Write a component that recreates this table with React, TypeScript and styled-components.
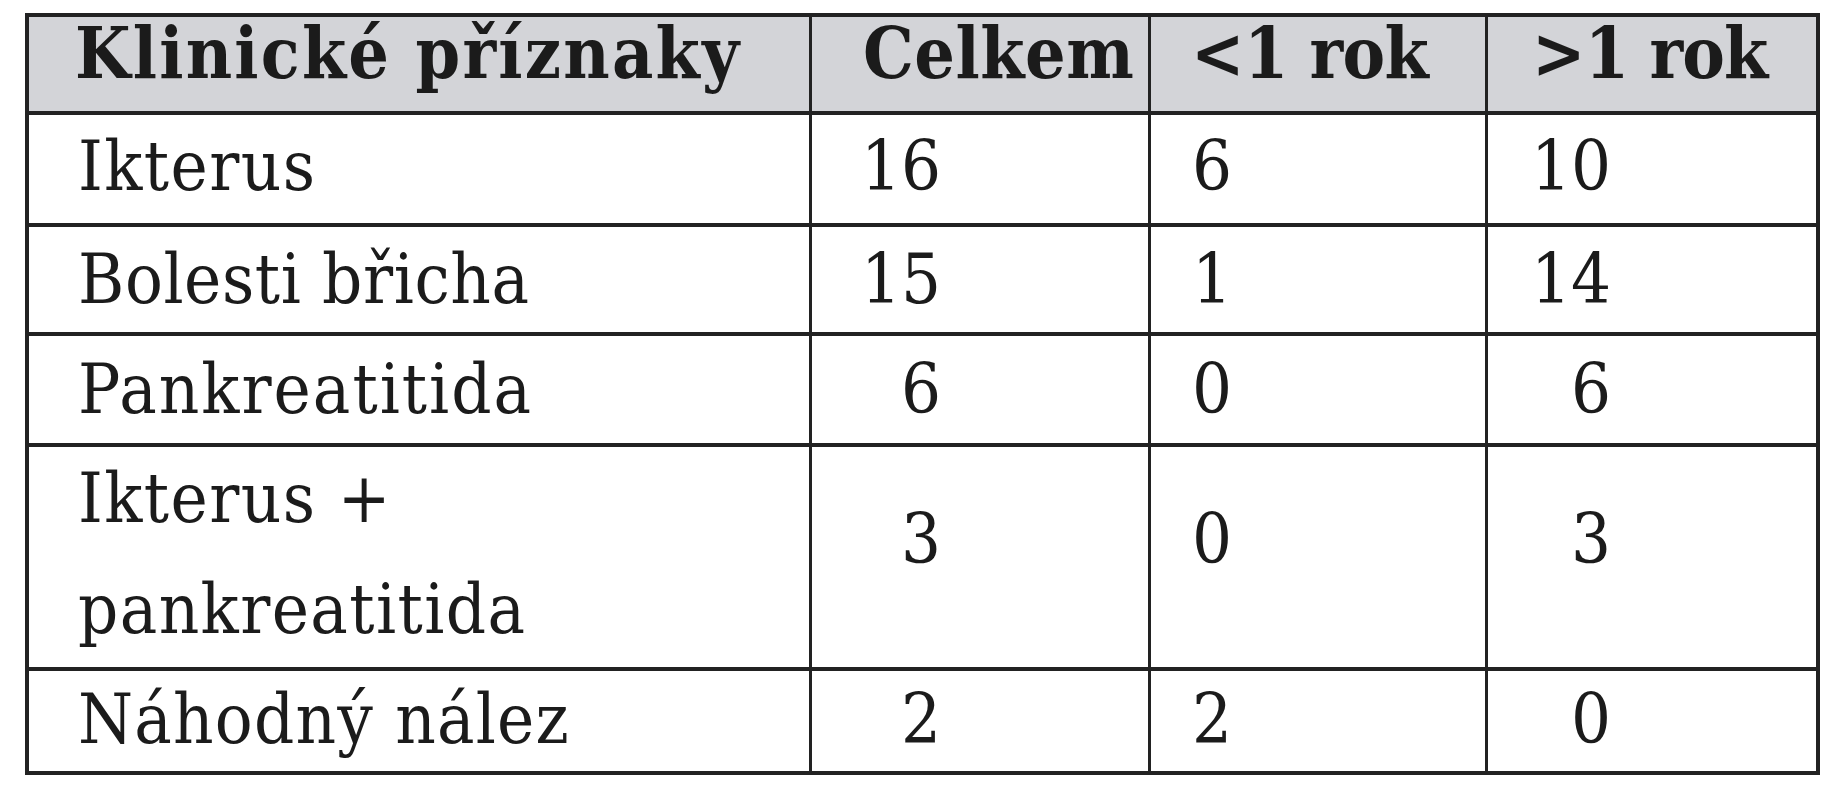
import React from "react";
import styled, { createGlobalStyle } from "styled-components";

const GlobalStyle = createGlobalStyle`
  html, body { margin: 0; padding: 0; background: #ffffff; }
  body {
    font-family: "DejaVu Serif Condensed", "DejaVu Serif", "Liberation Serif", serif;
    font-stretch: condensed;
    color: #1b1b1b;
  }
`;

const Page = styled.div`
  padding: 13px 0 0 25px;
`;

const Grid = styled.div`
  display: grid;
  width: fit-content;
  grid-template-columns: 780px 336px 334px 328px;
  grid-template-rows: 94px 108px 105px 107px 220px 100px;
  column-gap: 3px;
  row-gap: 4px;
  padding: 4px;
  background: #222222;
`;

const BaseCell = styled.div<{ $pad: number; $lift?: number; $track?: number }>`
  display: flex;
  flex-direction: column;
  justify-content: center;
  padding-left: ${(p) => p.$pad}px;
  padding-bottom: ${(p) => (p.$lift ?? 0) * 2}px;
  letter-spacing: ${(p) => p.$track ?? 0}px;
  box-sizing: border-box;
  white-space: nowrap;
`;

const HeadCell = styled(BaseCell)`
  background: #d3d4d8;
  font-weight: 700;
  font-size: 71px;
  line-height: 71px;
`;

const Cell = styled(BaseCell)`
  background: #ffffff;
  font-size: 70px;
  line-height: 111px;
`;

const Num = styled.span<{ $w: number }>`
  display: inline-block;
  min-width: ${(p) => p.$w}px;
  text-align: right;
`;

type Row = { label: string[]; total: string; under: string; over: string; lift?: number; numLift?: number; track?: number };

const rows: Row[] = [
  { label: ["Ikterus"], total: "16", under: "6", over: "10", lift: 3 },
  { label: ["Bolesti břicha"], total: "15", under: "1", over: "14", track: 0.6 },
  { label: ["Pankreatitida"], total: "6", under: "0", over: "6", track: 2 },
  { label: ["Ikterus +", "pankreatitida"], total: "3", under: "0", over: "3", lift: 3, numLift: 18 },
  { label: ["Náhodný nález"], total: "2", under: "2", over: "0", lift: 2, track: 1.2 },
];

export default function App() {
  return (
    <>
      <GlobalStyle />
      <Page>
        <Grid role="table">
          <HeadCell role="columnheader" $pad={46} $lift={11} $track={2.2}>Klinické příznaky</HeadCell>
          <HeadCell role="columnheader" $pad={51} $lift={11} $track={0.5}>Celkem</HeadCell>
          <HeadCell role="columnheader" $pad={40} $lift={11} $track={-0.6}>&lt;1 rok</HeadCell>
          <HeadCell role="columnheader" $pad={44} $lift={11} $track={-0.9}>&gt;1 rok</HeadCell>
          {rows.map((r) => (
            <React.Fragment key={r.label.join(" ")}>
              <Cell role="cell" $pad={49} $lift={r.lift} $track={r.track ?? 1.4}>
                {r.label.map((l) => (
                  <span key={l}>{l}</span>
                ))}
              </Cell>
              <Cell role="cell" $pad={49} $lift={r.numLift ?? r.lift}>
                <span><Num $w={80}>{r.total}</Num></span>
              </Cell>
              <Cell role="cell" $pad={41} $lift={r.numLift ?? r.lift}>
                <span>{r.under}</span>
              </Cell>
              <Cell role="cell" $pad={43} $lift={r.numLift ?? r.lift}>
                <span><Num $w={80}>{r.over}</Num></span>
              </Cell>
            </React.Fragment>
          ))}
        </Grid>
      </Page>
    </>
  );
}
